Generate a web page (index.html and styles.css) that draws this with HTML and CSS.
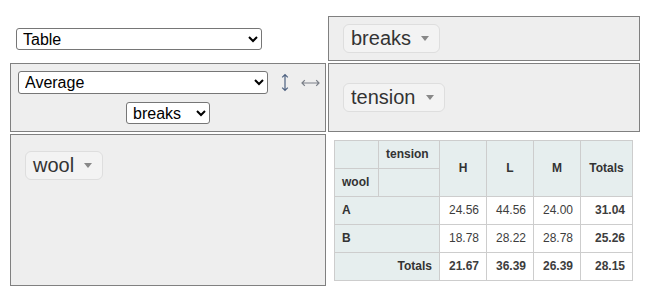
FILE: index.html
```html
<!DOCTYPE html>
<html>
<head>
    <title>Pivot Table | breaks by wool and tension</title>
    <link rel="stylesheet" href="styles.css">
</head>
<body>
    <div class="pvtUi">
        <div class="pvtRenderer">
            <select class="pvtDropdown rendererSel">
                <option>Table</option>
            </select>
        </div>
        <div class="pvtAxisContainer pvtUnused">
            <span class="pvtAttr">breaks<span class="pvtTriangle"></span></span>
        </div>

        <div class="pvtVals">
            <div class="aggRow">
                <select class="pvtDropdown aggSel">
                    <option>Average</option>
                </select>
                <a class="pvtRowOrder" role="button">
                    <svg width="8" height="19" viewBox="0 0 8 19">
                        <path d="M4 1.5V17.5M1.2 4.3L4 1.5L6.8 4.3M1.2 14.7L4 17.5L6.8 14.7" fill="none" stroke="#4d6180" stroke-width="1.2"/>
                    </svg>
                </a>
                <a class="pvtColOrder" role="button">
                    <svg width="19" height="8" viewBox="0 0 19 8">
                        <path d="M1 4H18M3.8 1.2L1 4L3.8 6.8M15.2 1.2L18 4L15.2 6.8" fill="none" stroke="#7a7f88" stroke-width="1.2"/>
                    </svg>
                </a>
            </div>
            <select class="pvtDropdown attrSel">
                <option>breaks</option>
            </select>
        </div>
        <div class="pvtAxisContainer pvtCols">
            <span class="pvtAttr">tension<span class="pvtTriangle"></span></span>
        </div>

        <div class="pvtAxisContainer pvtRows">
            <span class="pvtAttr">wool<span class="pvtTriangle"></span></span>
        </div>
        <div class="pvtOutput">
            <table class="pvtTable">
                <colgroup>
                    <col class="c1"><col class="c2"><col class="cv"><col class="cv"><col class="cv"><col class="ct">
                </colgroup>
                <thead>
                    <tr>
                        <th></th>
                        <th class="pvtAxisLabel">tension</th>
                        <th class="pvtColLabel" rowspan="2">H</th>
                        <th class="pvtColLabel" rowspan="2">L</th>
                        <th class="pvtColLabel" rowspan="2">M</th>
                        <th class="pvtTotalLabel pvtColLabel" rowspan="2">Totals</th>
                    </tr>
                    <tr>
                        <th class="pvtAxisLabel">wool</th>
                        <th></th>
                    </tr>
                </thead>
                <tbody>
                    <tr>
                        <th class="pvtRowLabel" colspan="2">A</th>
                        <td class="pvtVal">24.56</td>
                        <td class="pvtVal">44.56</td>
                        <td class="pvtVal">24.00</td>
                        <td class="pvtTotal">31.04</td>
                    </tr>
                    <tr>
                        <th class="pvtRowLabel" colspan="2">B</th>
                        <td class="pvtVal">18.78</td>
                        <td class="pvtVal">28.22</td>
                        <td class="pvtVal">28.78</td>
                        <td class="pvtTotal">25.26</td>
                    </tr>
                    <tr>
                        <th class="pvtTotalLabel" colspan="2">Totals</th>
                        <td class="pvtTotal">21.67</td>
                        <td class="pvtTotal">36.39</td>
                        <td class="pvtTotal">26.39</td>
                        <td class="pvtGrandTotal">28.15</td>
                    </tr>
                </tbody>
            </table>
        </div>
    </div>
</body>
</html>
```

FILE: styles.css
```css
body {
    margin: 0;
    background: #fff;
    font-family: "Liberation Sans", Arial, sans-serif;
    color: #333;
}
.pvtUi {
    display: grid;
    grid-template-columns: 316px 312px;
    grid-template-rows: 45px 69px 152px;
    column-gap: 2px;
    row-gap: 2px;
    padding: 16px 0 0 10px;
}
.pvtDropdown {
    font-family: "Liberation Sans", Arial, sans-serif;
    font-size: 16px;
    color: #000;
    background: #fff;
    border: 1px solid #767676;
    border-radius: 3px;
    padding: 0 2px;
    box-sizing: border-box;
}
.pvtRenderer {
    display: flex;
    align-items: center;
    padding-left: 6px;
    padding-top: 1px;
}
.rendererSel {
    width: 246px;
    height: 22px;
}
.pvtAxisContainer, .pvtVals {
    border: 1px solid gray;
    background: #eee;
    box-sizing: border-box;
}
.pvtUnused, .pvtCols {
    display: flex;
    align-items: center;
    padding-left: 14px;
}
.pvtCols {
    padding-bottom: 1px;
}
.pvtRows {
    padding: 16px 0 0 14px;
    grid-row: 3;
    height: 152px;
}
.pvtAttr {
    display: inline-flex;
    align-items: center;
    height: 29px;
    box-sizing: border-box;
    padding: 0 10px 0 7px;
    font-size: 20px;
    color: #333;
    background: #f3f3f3;
    border: 1px solid #dedede;
    border-radius: 6px;
    white-space: nowrap;
}
.pvtTriangle {
    display: inline-block;
    margin-left: 10px;
    width: 0;
    height: 0;
    border-left: 4px solid transparent;
    border-right: 4px solid transparent;
    border-top: 5px solid #888;
}
.pvtVals {
    padding: 7px 0 0 7px;
    display: flex;
    flex-direction: column;
}
.aggRow {
    display: flex;
    align-items: center;
}
.aggSel {
    width: 250px;
    height: 23px;
}
.pvtRowOrder {
    display: inline-flex;
    margin-left: 13px;
}
.pvtColOrder {
    display: inline-flex;
    margin-left: 12px;
}
.attrSel {
    width: 84px;
    height: 22px;
    margin: 8px 0 0 108px;
}
.pvtOutput {
    grid-row: 3;
    padding: 6px 0 0 6px;
}
table.pvtTable {
    border-collapse: collapse;
    table-layout: fixed;
    width: 299px;
    font-size: 12px;
    text-align: left;
}
.pvtTable col.c1 { width: 44px; }
.pvtTable col.c2 { width: 61px; }
.pvtTable col.cv { width: 47px; }
.pvtTable col.ct { width: 52px; }
.pvtTable th {
    background: #e6eeee;
    border: 1px solid #cdcdcd;
    padding: 5px 7px;
    line-height: 17px;
    color: #333;
    font-weight: bold;
}
.pvtTable .pvtColLabel {
    text-align: center;
}
.pvtTable .pvtTotalLabel {
    text-align: right;
}
.pvtTable .pvtTotalLabel.pvtColLabel {
    text-align: center;
}
.pvtTable td {
    background: #fff;
    border: 1px solid #cdcdcd;
    padding: 5px 7px;
    line-height: 17px;
    color: #3d3d3d;
    text-align: right;
}
.pvtTotal, .pvtGrandTotal {
    font-weight: bold;
}
```
